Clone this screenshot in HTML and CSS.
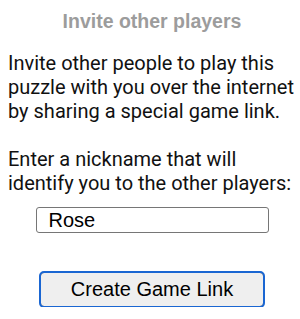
FILE: index.html
```html
<!DOCTYPE html>
<html lang="en">
<head>
    <meta charset="UTF-8">
    <meta name="viewport" content="width=device-width, initial-scale=1.0">
    <title>Invite other players</title>
    <link rel="stylesheet" href="styles.css">
</head>
<body>

<div class="dialog">
    <h2 class="dialog-title">Invite other players</h2>
    <p>Invite other people to play this puzzle with you over the internet by sharing a special game link.</p>
    <p>Enter a nickname that will identify you to the other players:</p>
    <div class="field-row">
        <input type="text" id="nicknameInput" class="nickname" value="Rose">
    </div>
    <div class="button-row">
        <button id="createButton" class="create-button">Create Game Link</button>
    </div>
</div>

</body>
</html>
```

FILE: styles.css
```css
body { margin: 0; padding: 0; background-color: #fff; font-family: 'Roboto', sans-serif; }
.dialog { width: 288px; margin-left: 8px; padding-top: 10px; }
.dialog-title { margin: 0; font-family: 'Liberation Sans', Arial, sans-serif; font-size: 19.5px; font-weight: bold; line-height: 22px; color: #9c9c9c; text-align: center; }
.dialog p { margin: 19px 0 0; font-size: 20px; line-height: 24px; color: #111; }
.dialog p + p { margin-top: 24px; }
.field-row { display: flex; justify-content: center; margin-top: 12px; }
.nickname { box-sizing: border-box; width: 233px; height: 26px; padding: 0 12px; border: 1px solid #767676; border-radius: 3px; font-family: 'Liberation Sans', Arial, sans-serif; font-size: 20px; color: #000; }
.button-row { display: flex; justify-content: center; margin-top: 39px; }
.create-button { box-sizing: border-box; width: 224px; height: 35px; padding: 0; background-color: #efefef; border: 1px solid #767676; border-radius: 4px; outline: 2px solid #1a66d2; outline-offset: -1px; font-family: 'Liberation Sans', Arial, sans-serif; font-size: 20px; color: #000; }
```
